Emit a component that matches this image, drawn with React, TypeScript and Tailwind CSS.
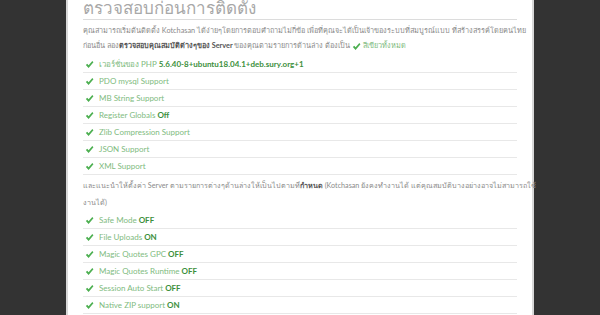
import React from 'react';

interface CheckItem {
  label: string;
  value?: string;
}

const serverItems: CheckItem[] = [
  { label: 'เวอร์ชั่นของ PHP', value: '5.6.40-8+ubuntu18.04.1+deb.sury.org+1' },
  { label: 'PDO mysql Support' },
  { label: 'MB String Support' },
  { label: 'Register Globals', value: 'Off' },
  { label: 'Zlib Compression Support' },
  { label: 'JSON Support' },
  { label: 'XML Support' },
];

const settingItems: CheckItem[] = [
  { label: 'Safe Mode', value: 'OFF' },
  { label: 'File Uploads', value: 'ON' },
  { label: 'Magic Quotes GPC', value: 'OFF' },
  { label: 'Magic Quotes Runtime', value: 'OFF' },
  { label: 'Session Auto Start', value: 'OFF' },
  { label: 'Native ZIP support', value: 'ON' },
];

function Check() {
  return (
    <svg viewBox="0 0 16 16" className="w-[9px] h-[9px] shrink-0" aria-hidden>
      <path d="M1.5 8.8 L4 6.6 L6.4 9.4 L13 1.8 L15 3.8 L6.4 14 Z" fill="#4caf50" />
    </svg>
  );
}

function CheckList({ items }: { items: CheckItem[] }) {
  return (
    <ul>
      {items.map((item, i) => (
        <li key={i} className="h-[17px] flex items-center gap-[5px] pl-[2px] border-b border-[#e8e8e8] text-[#80bb80] whitespace-nowrap">
          <Check />
          <span>
            {item.label}
            {item.value && <b className="text-[#3c8f3c] font-bold"> {item.value}</b>}
          </span>
        </li>
      ))}
    </ul>
  );
}

export default function App() {
  return (
    <div className="w-[600px] h-[315px] overflow-hidden bg-[#333333] flex justify-center" style={{ fontFamily: 'Lato, "Noto Sans", "DejaVu Sans", sans-serif' }}>
      <div className="w-[468px] h-full bg-white border-x-2 border-[#d8d8d8] px-[15px]">
        <h1 className="-mt-[4px] text-[17px] leading-[23px] text-[#a8a8a8] border-b border-[#dcdcdc]">
          ตรวจสอบก่อนการติดตั้ง
        </h1>
        <p className="text-[7.3px] leading-[15px] text-[#8a8a8a] mt-[3px] whitespace-nowrap">
          คุณสามารถเริ่มต้นติดตั้ง Kotchasan ได้ง่ายๆโดยการตอบคำถามไม่กี่ข้อ เพื่อที่คุณจะได้เป็นเจ้าของระบบที่สมบูรณ์แบบ ที่สร้างสรรค์โดยคนไทย
          <br />
          ก่อนอื่น ลอง<b className="text-[#555]">ตรวจสอบคุณสมบัติต่างๆของ Server</b> ของคุณตามรายการด้านล่าง ต้องเป็น{' '}
          <span className="inline-flex align-middle"><Check /></span>{' '}
          <span className="text-[#80bb80]">สีเขียวทั้งหมด</span>
        </p>
        <div className="text-[8px] mt-[3px]">
          <CheckList items={serverItems} />
        </div>
        <p className="text-[7.2px] leading-[17px] text-[#8a8a8a] mt-[2px] whitespace-nowrap">
          และแนะนำให้ตั้งค่า Server ตามรายการต่างๆด้านล่างให้เป็นไปตามที่<b className="text-[#555]">กำหนด</b> (Kotchasan ยังคงทำงานได้ แต่คุณสมบัติบางอย่างอาจไม่สามารถใช้
          <br />
          งานได้)
        </p>
        <div className="text-[8px] mt-[1px]">
          <CheckList items={settingItems} />
        </div>
      </div>
    </div>
  );
}
